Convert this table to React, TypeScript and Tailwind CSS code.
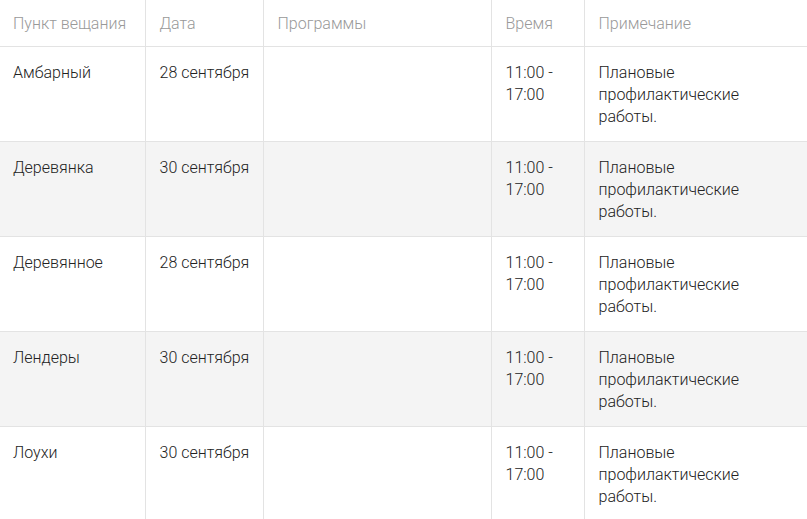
import React from "react";

type Row = {
  place: string;
  date: string;
  programs?: string;
  time: string[];
  note: string[];
};

const rows: Row[] = [
  { place: "Амбарный", date: "28 сентября", time: ["11:00 -", "17:00"], note: ["Плановые", "профилактические", "работы."] },
  { place: "Деревянка", date: "30 сентября", time: ["11:00 -", "17:00"], note: ["Плановые", "профилактические", "работы."] },
  { place: "Деревянное", date: "28 сентября", time: ["11:00 -", "17:00"], note: ["Плановые", "профилактические", "работы."] },
  { place: "Лендеры", date: "30 сентября", time: ["11:00 -", "17:00"], note: ["Плановые", "профилактические", "работы."] },
  { place: "Лоухи", date: "30 сентября", time: ["11:00 -", "17:00"], note: ["Плановые", "профилактические", "работы."] },
];

export default function App() {
  return (
    <div className="w-[807px] h-[519px] overflow-hidden bg-white" style={{ fontFamily: "Roboto, 'Noto Sans', sans-serif" }}>
      <table className="table-fixed border-collapse w-[807px] text-[16px] leading-[22px] font-light">
        <colgroup>
          <col className="w-[145px]" />
          <col className="w-[118px]" />
          <col className="w-[228px]" />
          <col className="w-[93px]" />
          <col />
        </colgroup>
        <thead>
          <tr className="h-[46px] border-b border-[#e3e3e3] text-[#999] text-left">
            <th className="font-light pl-[13px] pr-3 pt-[2px] border-r border-[#e3e3e3]">Пункт вещания</th>
            <th className="font-light pl-[14px] pr-3 pt-[2px] border-r border-[#e3e3e3]">Дата</th>
            <th className="font-light pl-[14px] pr-3 pt-[2px] border-r border-[#e3e3e3]">Программы</th>
            <th className="font-light pl-[14px] pr-3 pt-[2px] border-r border-[#e3e3e3]">Время</th>
            <th className="font-light pl-[14px] pr-3 pt-[2px]">Примечание</th>
          </tr>
        </thead>
        <tbody className="text-[#222]">
          {rows.map((r, i) => (
            <tr key={i} className={`border-b border-[#e3e3e3] align-top ${i % 2 === 1 ? "bg-[#f4f4f4]" : "bg-white"}`}>
              <td className="pl-[13px] pr-3 pt-[15px] pb-[13px] border-r border-[#e3e3e3]">{r.place}</td>
              <td className="pl-[14px] pr-3 pt-[15px] pb-[13px] border-r border-[#e3e3e3]">{r.date}</td>
              <td className="pl-[14px] pr-3 pt-[15px] pb-[13px] border-r border-[#e3e3e3]">{r.programs}</td>
              <td className="pl-[14px] pr-3 pt-[15px] pb-[13px] border-r border-[#e3e3e3]">
                {r.time.map((t, j) => (
                  <div key={j}>{t}</div>
                ))}
              </td>
              <td className="pl-[14px] pr-3 pt-[15px] pb-[13px]">
                {r.note.map((t, j) => (
                  <div key={j}>{t}</div>
                ))}
              </td>
            </tr>
          ))}
        </tbody>
      </table>
    </div>
  );
}
